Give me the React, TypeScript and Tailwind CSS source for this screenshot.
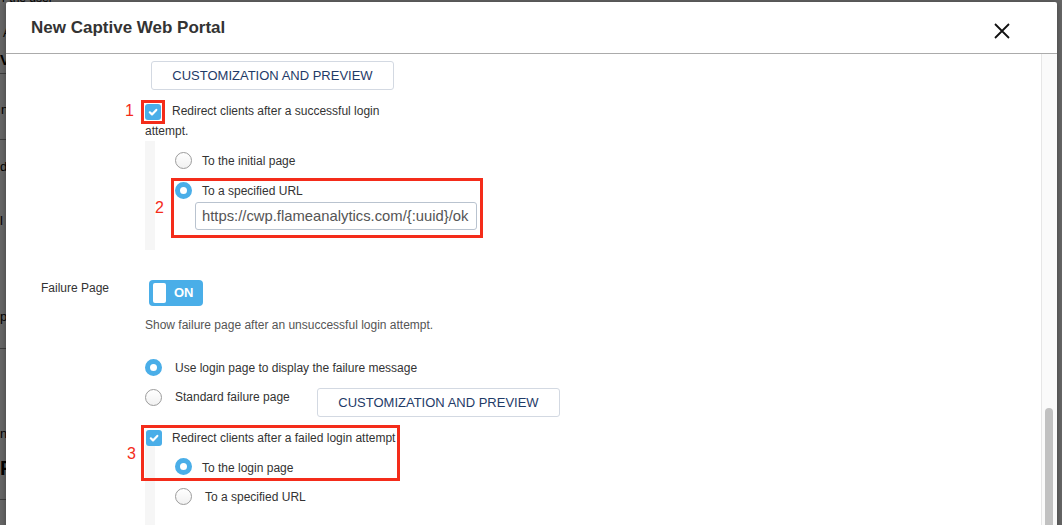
import React from "react";

function Radio({ checked }: { checked?: boolean }) {
  return checked ? (
    <span className="block h-[17px] w-[17px] shrink-0 rounded-full border-[5px] border-[#4aaee8] bg-white" />
  ) : (
    <span className="block h-[17px] w-[17px] shrink-0 rounded-full border border-[#9c9c9c] bg-gradient-to-b from-white to-[#f1f1f1]" />
  );
}

function Check() {
  return (
    <span className="flex h-4 w-4 shrink-0 items-center justify-center rounded-[3px] bg-[#4aaee8]">
      <svg viewBox="0 0 10 10" className="h-[10px] w-[10px]">
        <path
          d="M1.8 5.3l2.2 2.1L8.3 2.9"
          fill="none"
          stroke="white"
          strokeWidth="2.2"
          strokeLinecap="round"
          strokeLinejoin="round"
        />
      </svg>
    </span>
  );
}

function PreviewButton({ className = "" }: { className?: string }) {
  return (
    <button
      className={
        "h-[29px] w-[243px] shrink-0 rounded-[3px] border border-[#d3d9e2] bg-white text-[13px] text-[#1f3b68] " +
        className
      }
    >
      CUSTOMIZATION AND PREVIEW
    </button>
  );
}

// dimmed page behind the dialog, only a sliver shows on the left
function BackgroundPage() {
  return (
    <div className="flex w-[200px] flex-col text-black">
      <div className="-mt-[8px] h-[12px] pl-[2px] text-[12px] leading-[12px]">r the user</div>
      <div className="mt-[22px] h-[14px] pl-[3px] text-[12px] leading-[14px]">Al</div>
      <div className="mt-[12px] h-[16px] text-[15px] font-bold leading-[16px]">VI</div>
      <div className="mt-[5px] border-b border-[#999]" />
      <div className="mt-[29px] h-[14px] pl-[1px] text-[13px] leading-[14px]">n</div>
      <div className="mt-[22px] border-b border-[#999]" />
      <div className="mt-[20px] h-[14px] text-[13px] leading-[14px]">d</div>
      <div className="mt-[40px] h-[14px] text-[13px] leading-[14px]">l</div>
      <div className="mt-[82px] h-[14px] text-[13px] leading-[14px]">p</div>
      <div className="mt-[24px] border-b border-[#999]" />
      <div className="mt-[78px] h-[14px] text-[13px] leading-[14px]">n</div>
      <div className="mt-[18px] h-[18px] text-[20px] font-bold leading-[18px]">R</div>
      <div className="mt-[22px] border-b border-[#999]" />
    </div>
  );
}

export default function App() {
  return (
    <div className="relative h-[525px] w-[1062px] overflow-hidden bg-white font-['Liberation_Sans',Arial,sans-serif]">
      <BackgroundPage />
      <div className="absolute inset-0 bg-black/60" />

      <div className="absolute bottom-[-30px] left-[6px] top-[2px] flex w-[1051px] flex-col rounded-t-[2px] bg-white shadow-[0_0_6px_rgba(0,0,0,0.35)]">
        <div className="flex h-[52px] shrink-0 items-center justify-between border-b border-[#ababab] pl-[25px] pr-[47px]">
          <h1 className="text-[17px] font-bold text-[#333]">New Captive Web Portal</h1>
          <svg viewBox="0 0 16 16" className="mt-[7px] h-4 w-4">
            <path d="M1 1L15 15M15 1L1 15" stroke="#111" strokeWidth="1.8" fill="none" />
          </svg>
        </div>

        <div className="flex min-h-0 flex-1">
          <div className="flex-1 overflow-hidden pl-[35px] text-[12px] text-[#333]">
            {/* success redirect */}
            <div className="ml-[104px] flex flex-col items-start">
              <PreviewButton className="ml-[6px] mt-[7px]" />
              <p className="relative mt-[11px] w-[240px] leading-[20px]">
                <span className="absolute left-[-20px] top-[2px] text-[16px] leading-none text-[#f42c1a]">1</span>
                <span className="-my-1 -ml-1 mr-[7px] inline-block border-[3px] border-[#f42c1a] p-px align-middle">
                  <Check />
                </span>
                Redirect clients after a successful login attempt.
              </p>
              <div className="w-[400px] border-l-[10px] border-[#f6f6f6] pb-[12px] pt-[11px]">
                <div className="flex h-[17px] items-center pl-[20px]">
                  <Radio />
                  <span className="ml-[10px]">To the initial page</span>
                </div>
                <div className="relative ml-[16px] mt-[9px] w-[312px] border-[3px] border-[#f42c1a] pb-[5px] pl-px pt-px">
                  <span className="absolute left-[-19px] top-[19px] text-[16px] leading-none text-[#f42c1a]">2</span>
                  <div className="flex h-[17px] items-center">
                    <Radio checked />
                    <span className="ml-[10px]">To a specified URL</span>
                  </div>
                  <div className="ml-[20px] mt-[3px] flex h-[28px] w-[282px] items-center rounded-[3px] border border-[#b9c3cf] px-[6px] text-[14.8px] text-[#555]">
                    {"https://cwp.flameanalytics.com/{:uuid}/ok"}
                  </div>
                </div>
              </div>
            </div>

            {/* failure page */}
            <div className="mt-[30px] flex">
              <div className="w-[104px] shrink-0 pt-px leading-[14px]">Failure Page</div>
              <div className="flex flex-col items-start">
                <div className="ml-[4px] flex h-[26px] w-[54px] items-center rounded-[4px] bg-[#4aaee8] pl-[4px]">
                  <span className="h-[20px] w-[13px] rounded-[2px] bg-white" />
                  <span className="ml-[8px] text-[13px] font-bold text-white">ON</span>
                </div>
                <p className="mt-[10px] leading-[19px] text-[#555]">
                  Show failure page after an unsuccessful login attempt.
                </p>
                <div className="mt-[24px] flex h-[17px] items-center">
                  <Radio checked />
                  <span className="ml-[13px]">Use login page to display the failure message</span>
                </div>
                <div className="mt-[12px] flex items-start">
                  <span className="mt-px">
                    <Radio />
                  </span>
                  <span className="ml-[13px] mt-px w-[142px] leading-[17px]">Standard failure page</span>
                  <PreviewButton />
                </div>
                <div className="relative mt-[13px] w-[400px]">
                  <span className="pointer-events-none absolute left-[-4px] top-[-5px] h-[56px] w-[259px] border-[3px] border-[#f42c1a]" />
                  <span className="absolute left-[-18px] top-[16px] text-[16px] leading-none text-[#f42c1a]">3</span>
                  <div className="flex h-4 items-center pl-px">
                    <Check />
                    <span className="ml-[10px]">Redirect clients after a failed login attempt</span>
                  </div>
                  <div className="-mt-px border-l-[10px] border-[#f6f6f6] pb-[40px] pt-[13px]">
                    <div className="flex h-[17px] items-center pl-[20px]">
                      <Radio checked />
                      <span className="ml-[10px] mt-[3px]">To the login page</span>
                    </div>
                    <div className="mt-[13px] flex h-[17px] items-center pl-[20px]">
                      <Radio />
                      <span className="ml-[13px]">To a specified URL</span>
                    </div>
                  </div>
                </div>
              </div>
            </div>
          </div>

          {/* scrollbar */}
          <div className="w-[16px] shrink-0 border-l border-[#e6e6e6] bg-[#fafafa]">
            <div className="ml-[3px] mt-[354px] h-[200px] w-[8px] rounded-full bg-[#c1c1c1]" />
          </div>
        </div>
      </div>
    </div>
  );
}
